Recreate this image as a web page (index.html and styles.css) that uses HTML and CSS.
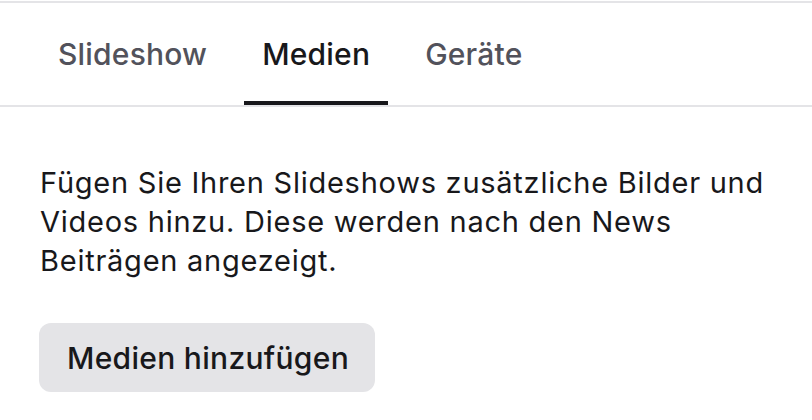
FILE: index.html
```html
<!DOCTYPE html>
<html lang="de">
<head>
<meta charset="utf-8">
<link rel="stylesheet" href="styles.css">
</head>
<body>
<div class="panel">
  <nav class="tabs">
    <div class="tab">Slideshow</div>
    <div class="tab active">Medien</div>
    <div class="tab">Geräte</div>
  </nav>
  <section class="content">
    <p class="desc">Fügen Sie Ihren Slideshows zusätzliche Bilder und Videos hinzu. Diese werden nach den News Beiträgen angezeigt.</p>
    <button class="btn">Medien hinzufügen</button>
  </section>
</div>
</body>
</html>
```

FILE: styles.css
```css
html, body {
  margin: 0;
  padding: 0;
  background: #fff;
}
body {
  font-family: Inter, "Noto Sans", sans-serif;
  color: #18181b;
  padding-top: 1px;
}
.panel {
  border-top: 2px solid #e4e4e7;
}
.tabs {
  display: flex;
  gap: 19px;
  padding: 0 22px 0 40px;
  border-bottom: 2px solid #e4e4e7;
  height: 102px;
  align-items: stretch;
}
.tab {
  font-size: 30px;
  font-weight: 500;
  letter-spacing: 0.2px;
  color: #52525b;
  padding: 0 18px;
  display: flex;
  align-items: center;
  box-sizing: border-box;
  border-bottom: 4px solid transparent;
  padding-top: 4px;
}
.tab.active {
  color: #18181b;
  border-bottom-color: #18181b;
}
.content {
  padding: 56px 30px 0 40px;
}
.desc {
  margin: 0;
  font-size: 29px;
  line-height: 39px;
  letter-spacing: 0.75px;
  max-width: 742px;
}
.btn {
  display: block;
  margin-top: 43px;
  font-family: inherit;
  font-size: 30px;
  font-weight: 500;
  letter-spacing: 0.3px;
  color: #18181b;
  background: #e4e4e7;
  border: 0;
  border-radius: 12px;
  height: 69px;
  padding: 0 26px 0 28px;
  margin-left: -1px;
}
```
